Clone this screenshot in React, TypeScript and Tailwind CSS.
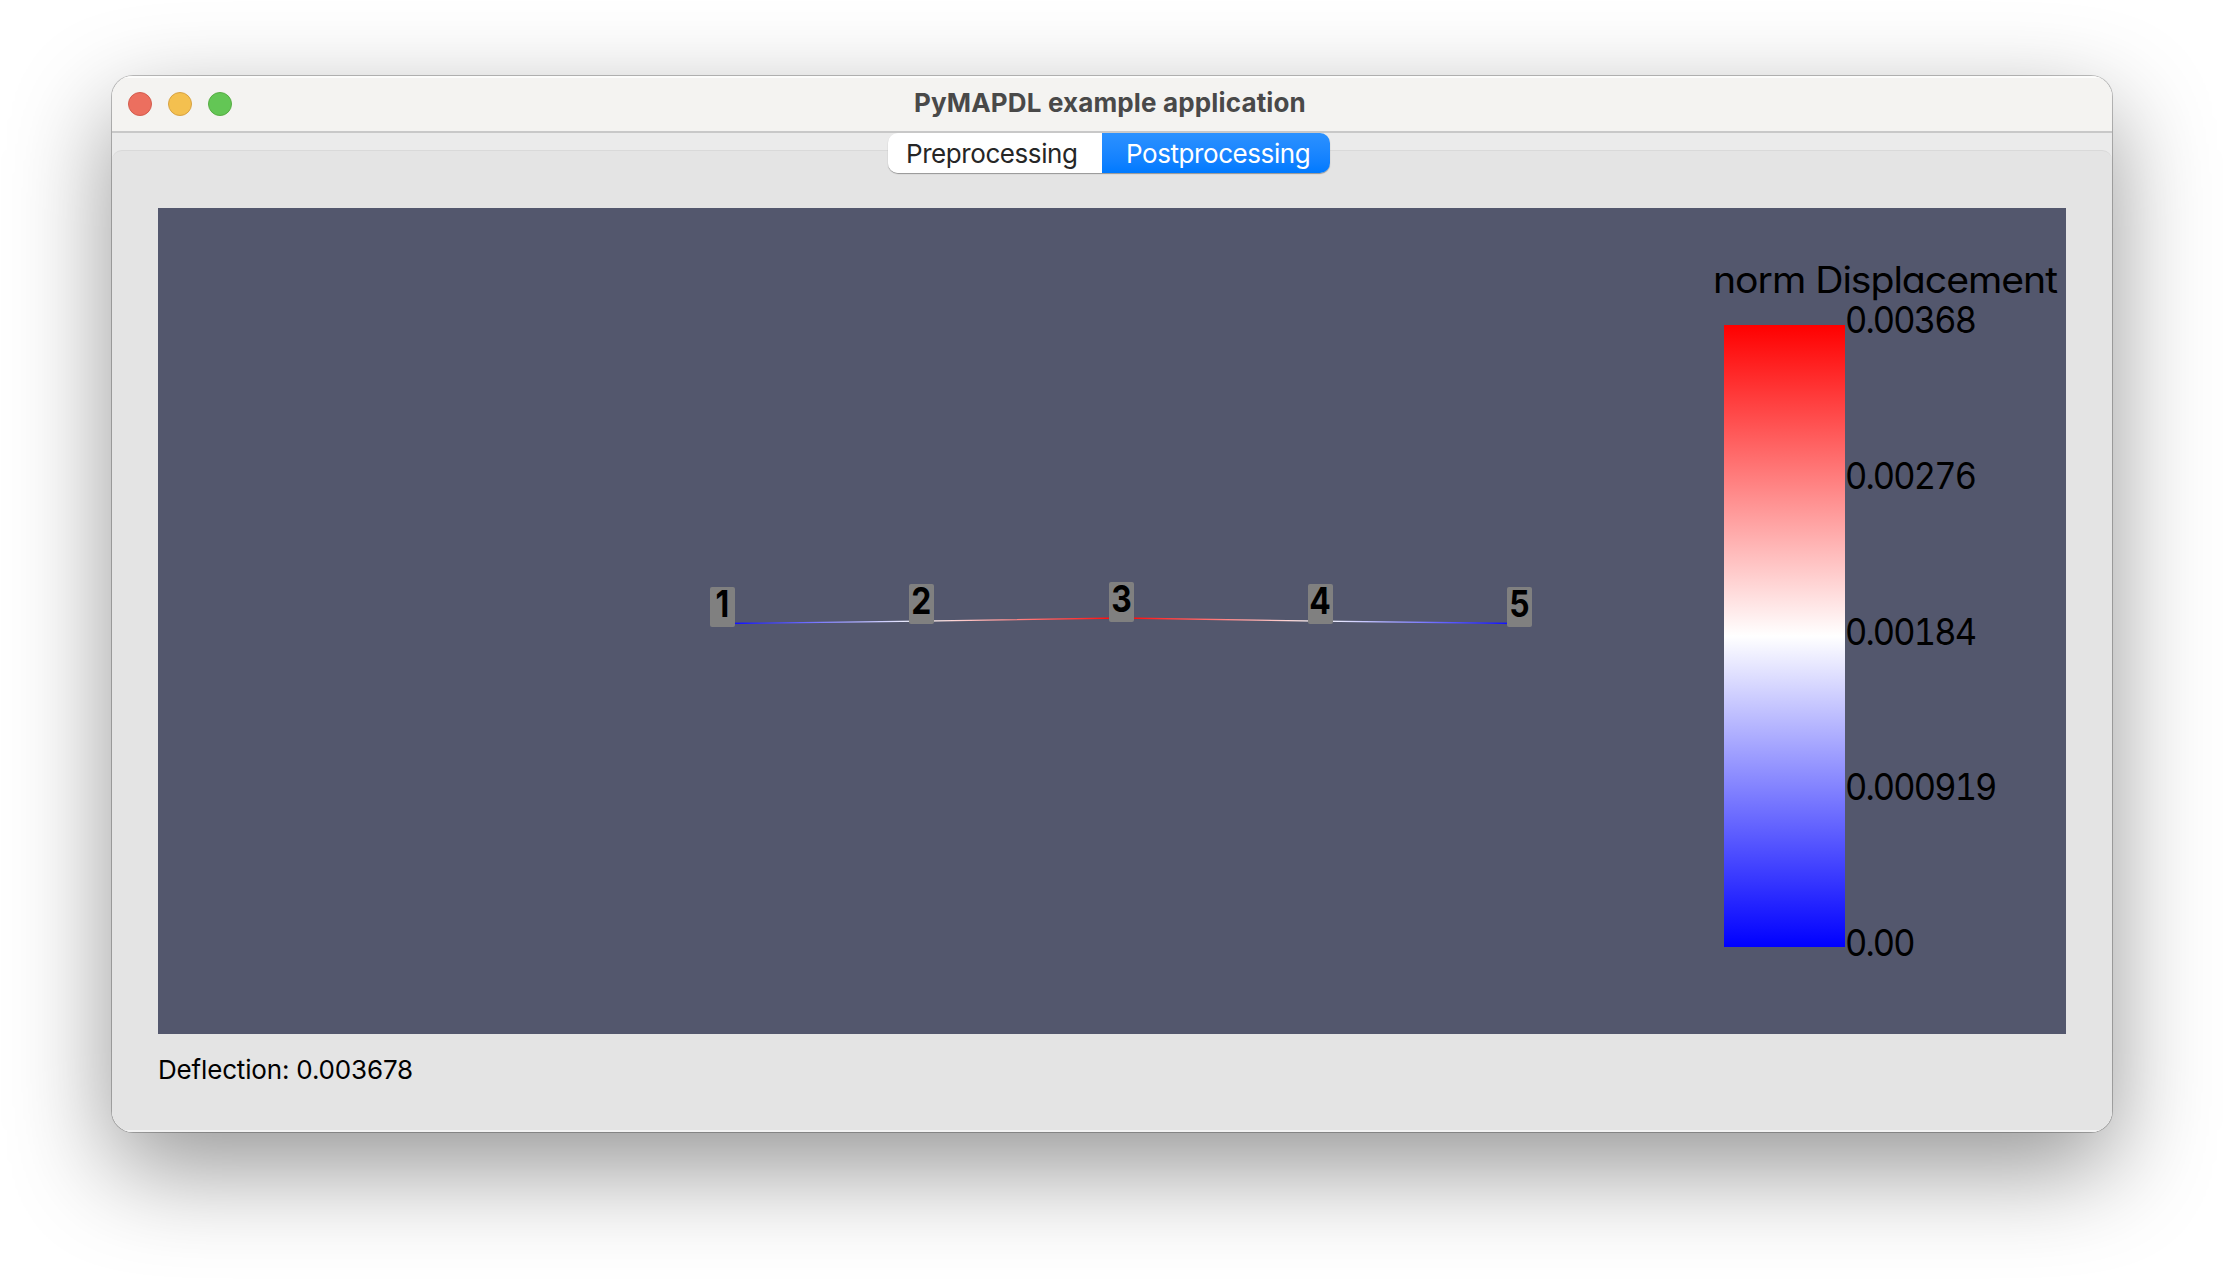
const ticks = ["0.00368", "0.00276", "0.00184", "0.000919", "0.00"];

const nodes = [
  { id: "1", place: "left-[552px] top-[379px]" },
  { id: "2", place: "left-[751px] top-[376px]" },
  { id: "3", place: "left-[951px] top-[374px]" },
  { id: "4", place: "left-[1150px] top-[376px]" },
  { id: "5", place: "left-[1349px] top-[379px]" },
];

function TitleBar() {
  return (
    <header className="relative flex h-[57px] shrink-0 items-center border-b-2 border-[#c8c8c8] bg-[#f4f3f1] px-4 shadow-[inset_0_2px_0_#fcfcfb]">
      <div className="flex gap-4">
        <span className="size-6 rounded-full border border-[#d35c4e] bg-[#ec6f5f]" />
        <span className="size-6 rounded-full border border-[#d7a243] bg-[#f4c04f]" />
        <span className="size-6 rounded-full border border-[#57ac44] bg-[#63c655]" />
      </div>
      <h1 className="absolute left-[802px] top-[11px] whitespace-nowrap text-[26px] leading-[32px] font-bold tracking-[0.15px] text-[#494949]">
        PyMAPDL example application
      </h1>
    </header>
  );
}

function Tabs() {
  return (
    <div className="absolute left-[776px] top-0 flex h-10 w-[442px] overflow-hidden rounded-[10px] text-[26px] leading-[39px] tracking-[-0.43px] shadow-[0_1px_1px_rgba(0,0,0,0.35)]">
      <button className="w-[214px] bg-white pl-[18px] text-left text-[#262626]">Preprocessing</button>
      <button className="flex-1 bg-gradient-to-b from-[#2b91ff] to-[#007aff] pl-6 text-left text-white">Postprocessing</button>
    </div>
  );
}

function Beam() {
  return (
    <svg className="absolute left-0 top-0" width="1908" height="826">
      <defs>
        <linearGradient id="beam" gradientUnits="userSpaceOnUse" x1="564" y1="0" x2="1362" y2="0">
          <stop offset="0" stopColor="#0000ff" />
          <stop offset="0.25" stopColor="#ffffff" />
          <stop offset="0.5" stopColor="#ff0000" />
          <stop offset="0.75" stopColor="#ffffff" />
          <stop offset="1" stopColor="#0000ff" />
        </linearGradient>
      </defs>
      <path d="M564 415.5L763 413.2L963 410L1162 413.2L1362 415.5" fill="none" stroke="url(#beam)" strokeWidth="1.3" />
    </svg>
  );
}

function ScalarBar() {
  return (
    <div className="absolute left-[1558px] top-[57px] text-[37px] leading-[30px] text-black">
      <div className="h-[60px] w-0 whitespace-nowrap">
        <span className="inline-block origin-left -translate-x-[3px] scale-x-[1.06] tracking-[-1px] [font-feature-settings:'cv11']">
          norm Displacement
        </span>
      </div>
      <div className="flex pl-2">
        <div className="h-[622px] w-[121px] bg-[linear-gradient(to_bottom,#ff0000,#ffffff_50%,#0000ff)]" />
        <div className="-mt-5 flex h-[653px] origin-left scale-x-[0.93] flex-col justify-between tracking-[-2px] tabular-nums">
          {ticks.map((t) => (
            <span key={t}>{t}</span>
          ))}
        </div>
      </div>
    </div>
  );
}

export default function App() {
  return (
    <div className="flex h-[1280px] w-[2224px] overflow-hidden bg-white px-28 pt-19 font-['Inter',sans-serif]">
      <div className="h-[1056px] w-[2000px] rounded-[21px] shadow-[0_0_0_1px_rgba(0,0,0,0.24),0_36px_100px_rgba(0,0,0,0.42)]">
        <main className="flex h-full flex-col overflow-hidden rounded-[21px] bg-[#ebebeb]">
          <TitleBar />
          <div className="relative flex-1 pt-[17px]">
            <section className="flex h-full flex-col rounded-t-[10px] border-t border-[#d9d9d9] bg-[#e4e4e4] px-[46px] pt-[57px]">
              <div className="relative h-[826px] shrink-0 overflow-hidden bg-[#53576d]">
                <Beam />
                {nodes.map((n) => (
                  <span
                    key={n.id}
                    className={`absolute flex h-10 w-[25px] justify-center rounded-[2px] bg-[#808080] text-[37px] leading-[33px] font-bold text-black ${n.place}`}
                  >
                    <span className="-translate-x-[0.5px] scale-x-[0.86]">{n.id}</span>
                  </span>
                ))}
                <ScalarBar />
              </div>
              <p className="pt-5 text-[26px] leading-8 tracking-[-0.17px] text-black">Deflection: 0.003678</p>
            </section>
            <Tabs />
          </div>
          <div className="h-0.5 shrink-0 bg-[#f2f2f2]" />
        </main>
      </div>
    </div>
  );
}
